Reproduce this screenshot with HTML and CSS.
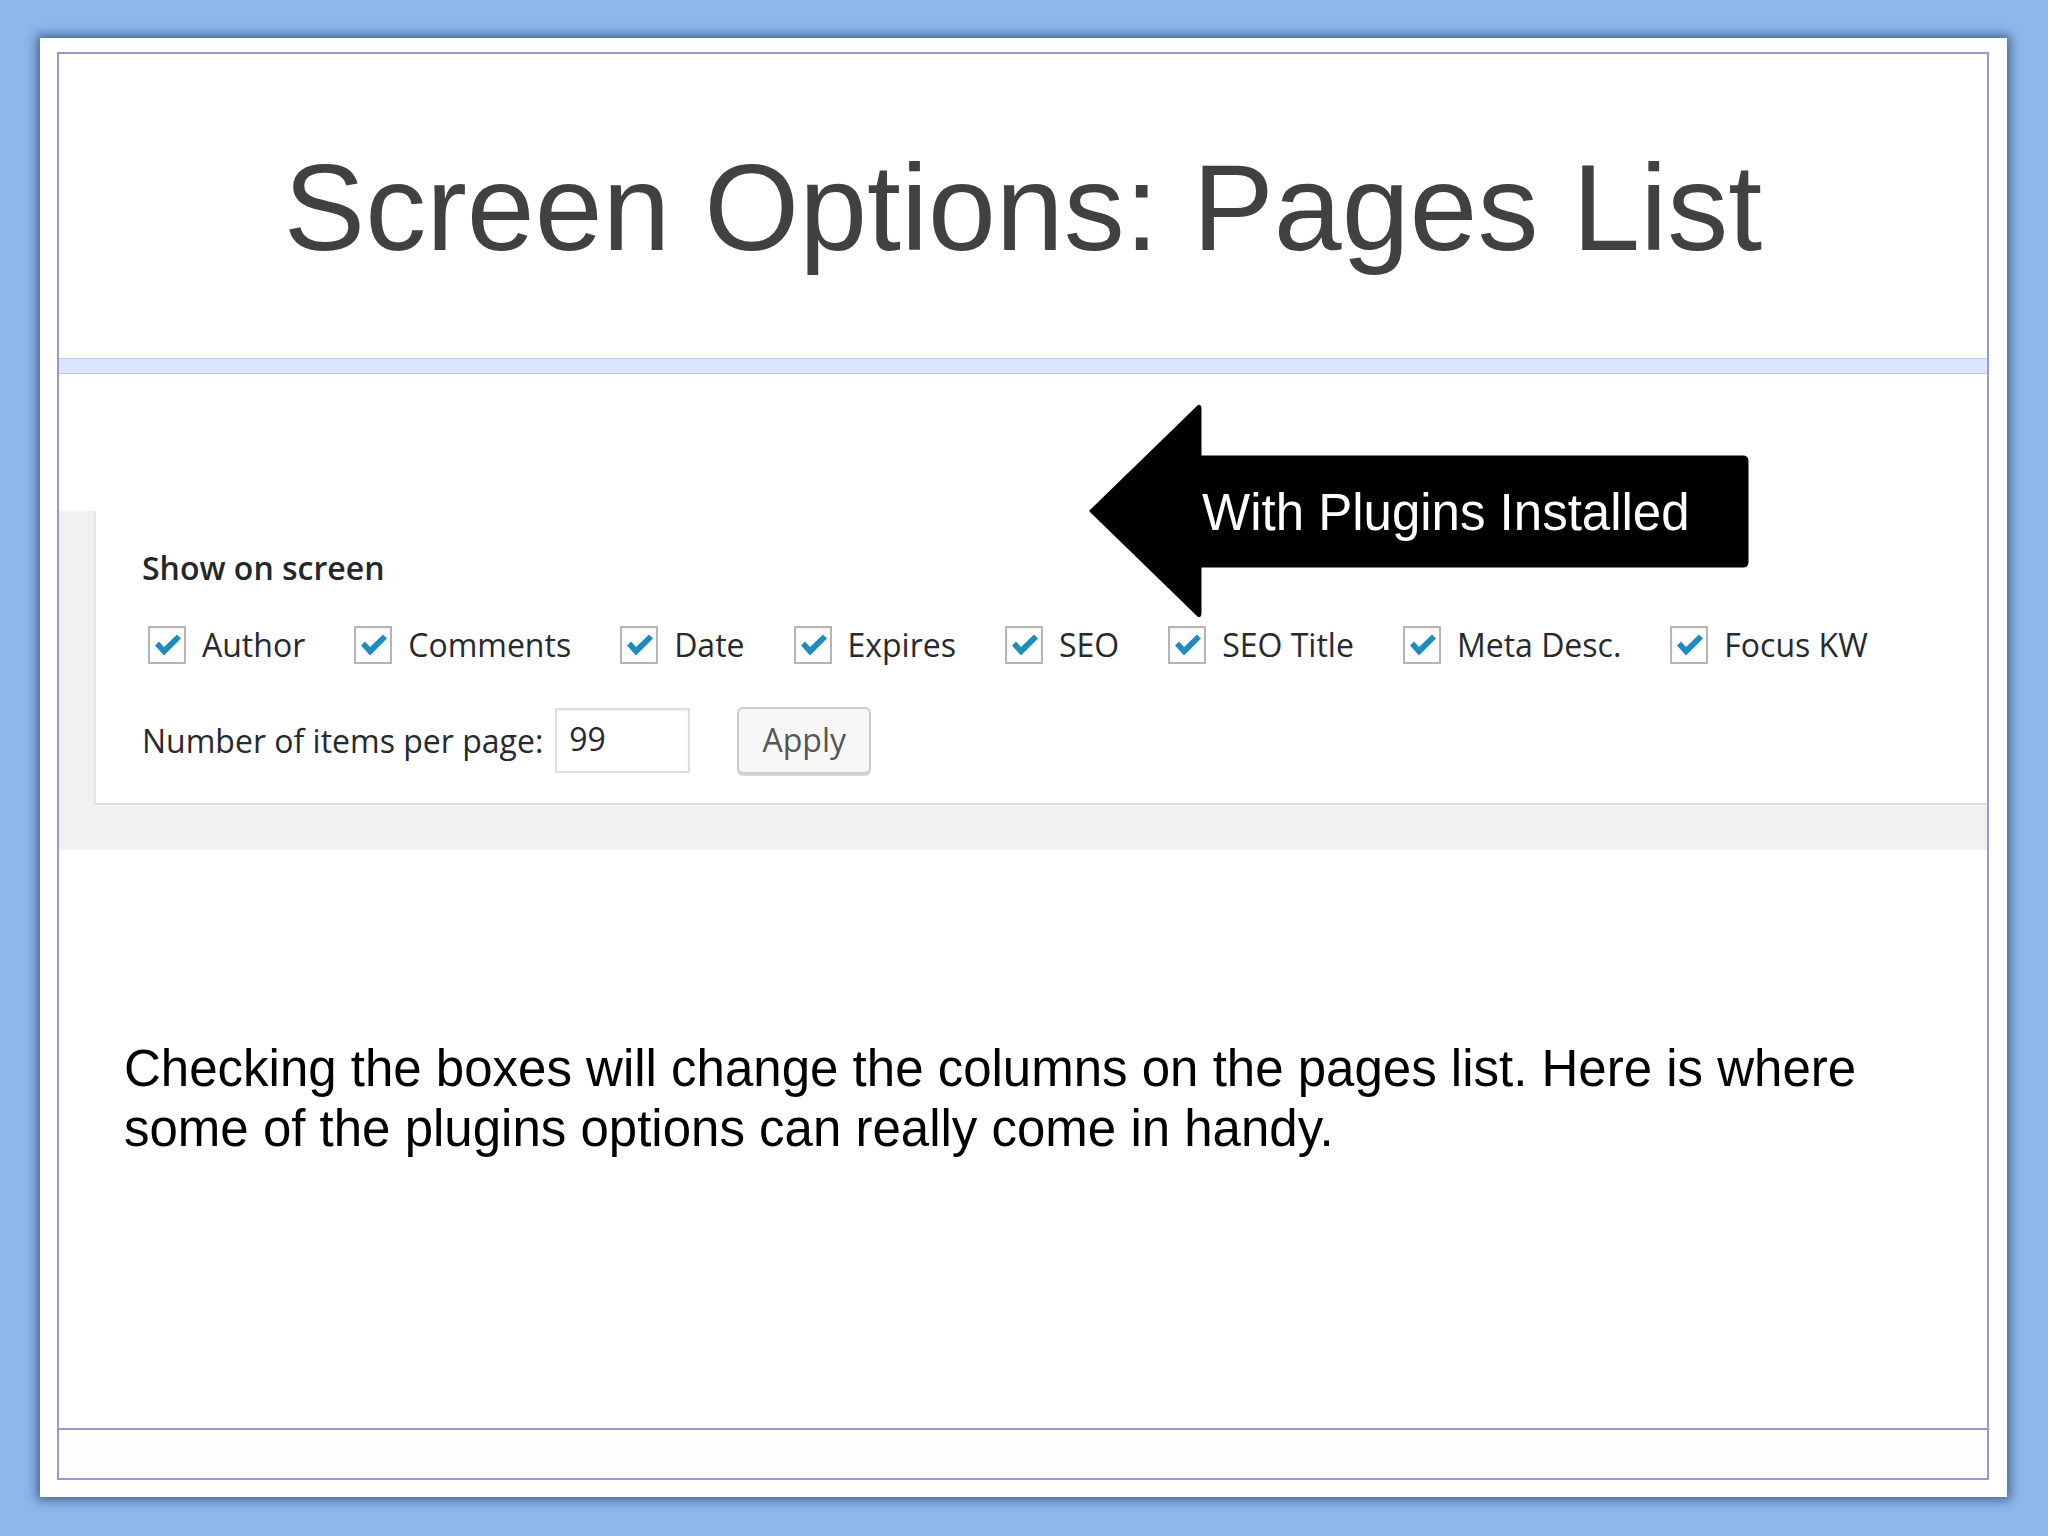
FILE: index.html
```html
<!DOCTYPE html>
<html lang="en">
<head>
<meta charset="utf-8">
<title>Screen Options: Pages List</title>
<link rel="stylesheet" href="styles.css">
</head>
<body>
<div class="slide">
  <div class="frame">
    <div class="title-area">
      <h1 class="title">Screen Options: Pages List</h1>
    </div>
    <div class="band"></div>
    <div class="content">
      <div class="wp">
        <div class="panel">
          <div class="legend">Show on screen</div>
          <div class="checks">
            <label class="item"><span class="box"><svg viewBox="0 0 38 38" class="tick"><path d="M7 19.5 L11 15.5 L16 21 L29 8.5 L33 12.5 L16 29.5 Z" fill="#1e8cbe"/></svg></span><span class="lbl">Author</span></label>
            <label class="item"><span class="box"><svg viewBox="0 0 38 38" class="tick"><path d="M7 19.5 L11 15.5 L16 21 L29 8.5 L33 12.5 L16 29.5 Z" fill="#1e8cbe"/></svg></span><span class="lbl">Comments</span></label>
            <label class="item"><span class="box"><svg viewBox="0 0 38 38" class="tick"><path d="M7 19.5 L11 15.5 L16 21 L29 8.5 L33 12.5 L16 29.5 Z" fill="#1e8cbe"/></svg></span><span class="lbl">Date</span></label>
            <label class="item"><span class="box"><svg viewBox="0 0 38 38" class="tick"><path d="M7 19.5 L11 15.5 L16 21 L29 8.5 L33 12.5 L16 29.5 Z" fill="#1e8cbe"/></svg></span><span class="lbl">Expires</span></label>
            <label class="item"><span class="box"><svg viewBox="0 0 38 38" class="tick"><path d="M7 19.5 L11 15.5 L16 21 L29 8.5 L33 12.5 L16 29.5 Z" fill="#1e8cbe"/></svg></span><span class="lbl">SEO</span></label>
            <label class="item"><span class="box"><svg viewBox="0 0 38 38" class="tick"><path d="M7 19.5 L11 15.5 L16 21 L29 8.5 L33 12.5 L16 29.5 Z" fill="#1e8cbe"/></svg></span><span class="lbl">SEO Title</span></label>
            <label class="item"><span class="box"><svg viewBox="0 0 38 38" class="tick"><path d="M7 19.5 L11 15.5 L16 21 L29 8.5 L33 12.5 L16 29.5 Z" fill="#1e8cbe"/></svg></span><span class="lbl">Meta Desc.</span></label>
            <label class="item"><span class="box"><svg viewBox="0 0 38 38" class="tick"><path d="M7 19.5 L11 15.5 L16 21 L29 8.5 L33 12.5 L16 29.5 Z" fill="#1e8cbe"/></svg></span><span class="lbl">Focus KW</span></label>
          </div>
          <div class="perpage">
            <span class="pp-label">Number of items per page:</span>
            <span class="input">99</span>
            <span class="button">Apply</span>
          </div>
        </div>
      </div>
      <p class="body-text">Checking the boxes will change the columns on the pages list. Here is where some of the plugins options can really come in handy.</p>
      <div class="arrow">
        <svg class="arrow-shape" viewBox="0 0 661 216" width="661" height="216">
          <path d="M3 108 L110 4 Q112 2 112 6 L112 54 L655 54 Q659 54 659 58 L659 159 Q659 163 655 163 L112 163 L112 210 Q112 214 110 212 Z" fill="#000" stroke="#000" stroke-width="3" stroke-linejoin="round"/>
        </svg>
        <span class="arrow-text">With Plugins Installed</span>
      </div>
    </div>
    <div class="footer-strip"></div>
  </div>
</div>
</body>
</html>
```

FILE: styles.css
```css
html, body {
  margin: 0;
  padding: 0;
}
body {
  width: 2048px;
  height: 1536px;
  background: #8db8ea;
  overflow: hidden;
  padding-top: 38px;
  box-sizing: border-box;
}
.slide {
  margin-left: 40px;
  width: 1967px;
  height: 1459px;
  background: #fff;
  box-sizing: border-box;
  padding: 14px 18px 17px 17px;
  box-shadow: 0 0 10px 3px rgba(40, 70, 110, 0.75);
}
.frame {
  height: 100%;
  box-sizing: border-box;
  border: 2px solid #9b97cf;
  display: flex;
  flex-direction: column;
}
.title-area {
  height: 304px;
  box-sizing: border-box;
  padding-top: 84px;
}
.title {
  margin: 0;
  text-align: center;
  font-family: "Liberation Sans", Arial, sans-serif;
  font-weight: normal;
  font-size: 122px;
  line-height: 1.15;
  color: #414043;
}
.band {
  height: 14px;
  background: #dde7fc;
  border-top: 1px solid #c3c6ea;
  border-bottom: 1px solid #c3c6ea;
}
.content {
  flex: 1;
  position: relative;
  padding-top: 137px;
}
.wp {
  height: 339px;
  background: #f1f1f1;
  padding-left: 35px;
  box-sizing: border-box;
}
.panel {
  height: 294px;
  box-sizing: border-box;
  background: #fff;
  border-left: 2px solid #e4e4e4;
  border-bottom: 2px solid #dedede;
  padding: 35px 0 0 46px;
  font-family: "Open Sans", "Noto Sans", sans-serif;
  color: #262a2f;
}
.legend {
  font-size: 32px;
  font-weight: 600;
  line-height: 44px;
  color: #23282d;
}
.checks {
  display: flex;
  align-items: center;
  margin-top: 36px;
  height: 38px;
}
.item {
  display: flex;
  align-items: center;
  margin-right: 49px;
}
.item:first-child {
  margin-left: 6px;
}
.box {
  width: 38px;
  height: 38px;
  box-sizing: border-box;
  border: 2px solid #b5b5b5;
  background: #fff;
  display: block;
  position: relative;
  box-shadow: inset 0 1px 2px rgba(0,0,0,0.08);
}
.tick {
  position: absolute;
  left: -2px;
  top: -2px;
  width: 38px;
  height: 38px;
}
.lbl {
  margin-left: 16px;
  font-size: 32px;
  line-height: 42px;
}
.perpage {
  display: flex;
  align-items: center;
  margin-top: 43px;
  height: 67px;
}
.pp-label {
  font-size: 32px;
  line-height: 42px;
}
.input {
  margin-left: 12px;
  width: 135px;
  height: 65px;
  box-sizing: border-box;
  border: 2px solid #dddddd;
  padding-left: 12px;
  font-size: 32px;
  line-height: 58px;
  color: #262a2f;
  box-shadow: inset 0 1px 2px rgba(0,0,0,0.07);
}
.button {
  margin-left: 47px;
  width: 134px;
  height: 67px;
  box-sizing: border-box;
  border: 2px solid #cccccc;
  border-radius: 6px;
  background: #f7f7f7;
  box-shadow: 0 2px 0 #d6d6d6;
  text-align: center;
  font-size: 32px;
  line-height: 62px;
  color: #555;
}
.body-text {
  margin: 189px 0 0 65px;
  width: 1800px;
  font-family: "Liberation Sans", Arial, sans-serif;
  font-size: 51px;
  line-height: 60px;
  color: #000;
}
.arrow {
  position: absolute;
  left: 1029px;
  top: 29px;
  width: 661px;
  height: 216px;
}
.arrow-shape {
  display: block;
}
.arrow-text {
  position: absolute;
  left: 114px;
  top: 84px;
  font-family: "Liberation Sans", Arial, sans-serif;
  font-size: 51px;
  line-height: 51px;
  color: #fff;
  white-space: nowrap;
}
.footer-strip {
  height: 48px;
  border-top: 2px solid #9b97cf;
  background: #fefdff;
}
```
